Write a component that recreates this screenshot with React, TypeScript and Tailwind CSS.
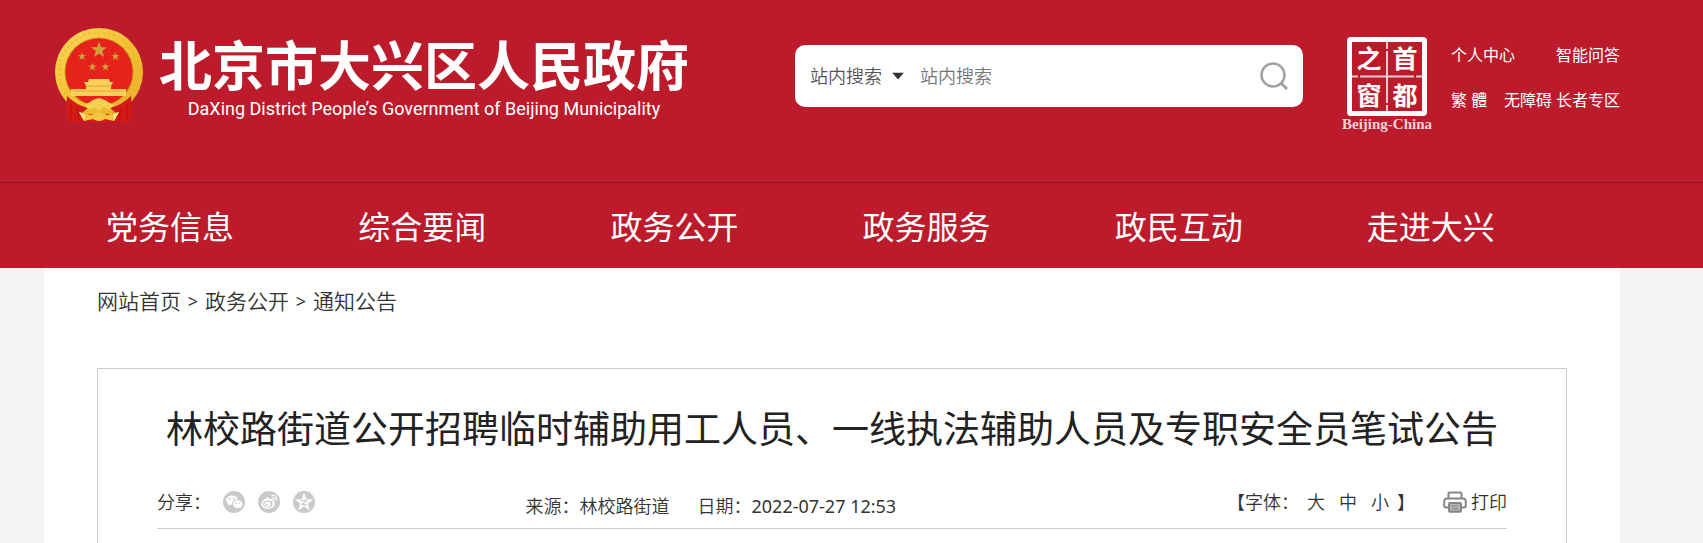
import React from 'react';

const NAV = ['党务信息', '综合要闻', '政务公开', '政务服务', '政民互动', '走进大兴'];
const CRUMBS = ['网站首页', '政务公开', '通知公告'];
const STAR = '0,-10 2.4,-3.2 9.5,-3.1 3.8,1.2 5.9,8.1 0,4 -5.9,8.1 -3.8,1.2 -9.5,-3.1 -2.4,-3.2';

function Emblem() {
  return (
    <svg viewBox="0 -1 90 96" className="h-24 w-[90px] shrink-0" role="img" aria-label="国徽">
      <defs>
        <linearGradient id="gold" x1="0" y1="0" x2="1" y2="1">
          <stop offset="0" stopColor="#fbd75a" />
          <stop offset="0.5" stopColor="#f3c233" />
          <stop offset="1" stopColor="#e9a92a" />
        </linearGradient>
      </defs>
      <circle cx="45" cy="43" r="44" fill="url(#gold)" />
      <circle cx="45" cy="43" r="39.500" fill="none" stroke="#efb933" strokeWidth="2" strokeDasharray="2 3" />
      <circle cx="45" cy="43" r="34.500" fill="#c98a1e" />
      <circle cx="45" cy="43" r="33.500" fill="#e5231a" />
      <g fill="#d0a03a">
        <polygon points={STAR} transform="translate(45 21) scale(0.85)" />
        <polygon points={STAR} transform="translate(28 27.500) scale(0.43)" />
        <polygon points={STAR} transform="translate(61.500 27.500) scale(0.43)" />
        <polygon points={STAR} transform="translate(38.500 38) scale(0.43)" />
        <polygon points={STAR} transform="translate(51.500 38) scale(0.43)" />
      </g>
      <path d="M35 50 h20 l1 3 h3 l-2 4 v3 h15 v7 H17 v-7 h15 v-3 l-2-4 h4 Z" fill="#f8d05a" />
      <path d="M32 57 h26 M20 62 h50" stroke="#e5a52e" strokeWidth="1" />
      <path d="M13 67 Q22 76 34 79 L28 84 L32 93 Q24 91 19 94 Q11 91 12 82 Z M77 67 Q68 76 56 79 L62 84 L58 93 Q66 91 71 94 Q79 91 78 82 Z" fill="#d31a14" />
      <path d="M17 74 Q18 84 16 91 M23 78 L25 91 M73 74 Q72 84 74 91 M67 78 L65 91" stroke="#b80f11" strokeWidth="1" fill="none" />
      <path d="M30 85 H60 L56 93 H34 Z" fill="#d31a14" />
      <path d="M30 76 l6-3 3-2 6-2 6 2 3 2 6 3 -5 5 -5-3 -5 4 -5-4 -5 3 Z" fill="#f7cf52" />
      <path d="M25 83 l12 3 q8-5 16 0 l12-3 -5 9 -9-2 q-6 4 -12 0 l-9 2 Z" fill="#f4c640" />
      <path d="M25 83 l6 2-1 7Z M65 83 l-6 2 1 7Z" fill="#fbe58a" />
    </svg>
  );
}

function Seal() {
  return (
    <a href="#beijing" className="flex w-[88px] shrink-0 flex-col items-center" aria-label="首都之窗">
      <svg viewBox="0 0 80 79" className="h-[79px] w-20">
        <rect x="2.500" y="2.500" width="75" height="74" rx="1.500" fill="none" stroke="#fff" strokeWidth="5" />
        <path d="M40 5 V12 M40 14 V66 M40 68 V75 M5 39.500 H11 M13 39.500 H67 M69 39.500 H75" stroke="#f3c9cd" strokeWidth="2" fill="none" />
        <g fill="#fff" fontSize="25" fontWeight="700" textAnchor="middle" fontFamily="'Noto Sans CJK SC', sans-serif">
          <text x="22" y="31">之</text>
          <text x="58" y="31">首</text>
          <text x="22" y="68">窗</text>
          <text x="58" y="68">都</text>
        </g>
      </svg>
      <span className="font-['Liberation_Serif',serif] text-[15px] leading-4 font-bold whitespace-nowrap text-[#f6d3d6]">Beijing-China</span>
    </a>
  );
}

function WechatIcon() {
  return (
    <svg viewBox="0 0 22 22" className="size-[22px]">
      <circle cx="11" cy="11" r="11" fill="#cacaca" />
      <path d="M9 4.500c-3.300 0-5.800 2-5.800 4.600 0 1.500.8 2.700 2 3.600L4.700 14.600l2.200-1.100c.7.200 1.400.3 2.100.3-.5-3.300 2.300-5.400 5.700-5.400C14.200 6 11.900 4.500 9 4.500Z" fill="#fff" />
      <path d="M14.800 9.300c-2.800 0-4.700 1.800-4.700 3.900s1.900 3.900 4.700 3.900c.6 0 1.200-.1 1.700-.3l1.700.9-.4-1.600c1-.7 1.700-1.700 1.700-2.900 0-2.100-2-3.900-4.700-3.900Z" fill="#fff" />
      <g fill="#cacaca">
        <circle cx="7" cy="8" r=".9" /><circle cx="11" cy="8" r=".9" />
        <circle cx="13.200" cy="12.300" r=".8" /><circle cx="16.500" cy="12.300" r=".8" />
      </g>
    </svg>
  );
}

function WeiboIcon() {
  return (
    <svg viewBox="0 0 22 22" className="size-[22px]">
      <circle cx="11" cy="11" r="11" fill="#cacaca" />
      <path d="M9.500 6.500c1.200-.4 2 .3 1.600 1.800 2-.8 4-.6 3.600 1.400 1.400.5 2.100 1.400 2.100 2.700 0 2.800-3.300 5.300-7.300 5.300S3.500 15.800 3.500 13.300c0-2.600 3.400-6 6-6.800Z" fill="#fff" />
      <ellipse cx="9.900" cy="13" rx="4.700" ry="3.400" fill="#cacaca" />
      <ellipse cx="9.600" cy="13.300" rx="3" ry="2.500" fill="#fff" />
      <circle cx="9" cy="13.700" r="1.100" fill="#cacaca" />
      <path d="M13.800 4.300c2.800-.6 5.300 1.800 4.500 4.700M14.200 6.800c1.300-.2 2.200.7 1.900 2" fill="none" stroke="#fff" strokeWidth="1.200" strokeLinecap="round" />
    </svg>
  );
}

function QzoneIcon() {
  return (
    <svg viewBox="0 0 22 22" className="size-[22px]">
      <circle cx="11" cy="11" r="11" fill="#cacaca" />
      <polygon points={STAR} transform="translate(11 11.500) scale(0.87)" fill="#fff" stroke="#fff" strokeLinejoin="round" />
      <path d="M8 9.500q3-.6 5.500 0l-4.500 4q2.500.6 4.500.1" fill="none" stroke="#cacaca" strokeWidth="1.200" />
    </svg>
  );
}

function PrinterIcon() {
  return (
    <svg viewBox="0 0 24 22" className="h-[22px] w-6" fill="none" stroke="#858585" strokeWidth="2">
      <path d="M5.500 8V2.500Q5.500 1.500 6.500 1.500H17.500Q18.500 1.500 18.500 2.500V8" />
      <path d="M5 16.500H3Q1.200 16.500 1.200 14.500V10.500Q1.200 7.500 4.200 7.500H19.800Q22.800 7.500 22.800 10.500V14.500Q22.800 16.500 21 16.500H19" />
      <rect x="6" y="12" width="12" height="8.800" rx="1" fill="#b4b4b4" />
      <path d="M8.500 15h7M8.500 17.800h7" strokeWidth="1" />
    </svg>
  );
}

export default function App() {
  return (
    <div className="min-h-screen bg-[#f4f4f4] font-['Noto_Sans','Noto_Sans_CJK_SC',sans-serif] text-[#333]">
      <header className="bg-[#bc1b2c] text-white">
        <div className="flex h-[182px] items-start pr-[83px] pl-[54px]">
          <a href="#home" className="flex shrink-0 pt-7">
            <Emblem />
            <span className="ml-[15px] flex flex-col items-center whitespace-nowrap">
              <span className="font-['Noto_Sans_CJK_SC',sans-serif] text-[53px] leading-[70px] font-bold">北京市大兴区人民政府</span>
              <span className="font-[Roboto,sans-serif] text-lg leading-[22px]">DaXing District People’s Government of Beijing Municipality</span>
            </span>
          </a>
          <form className="mt-[45px] ml-[106px] flex h-[62px] min-w-0 flex-1 items-center rounded-[10px] bg-white px-[15px] text-lg text-[#555]" onSubmit={(e) => e.preventDefault()}>
            <div className="relative shrink-0">
              <select aria-label="搜索范围" className="w-[98px] appearance-none bg-transparent font-[350] outline-none">
                <option>站内搜索</option>
              </select>
              <svg viewBox="0 0 12 7" className="pointer-events-none absolute top-1/2 right-1 h-[7px] w-3 -translate-y-1/2">
                <path d="M0 0H12L6 7Z" fill="#333" />
              </svg>
            </div>
            <input type="search" aria-label="站内搜索" placeholder="站内搜索" className="ml-3 min-w-0 flex-1 bg-transparent font-[350] outline-none placeholder:text-[#757575]" />
            <button type="submit" aria-label="搜索">
              <svg viewBox="0 0 28 28" className="size-7" fill="none" stroke="#a2a2a2" strokeWidth="2.500">
                <circle cx="13" cy="13" r="11.500" />
                <path d="M21 21l6 6" strokeWidth="3" />
              </svg>
            </button>
          </form>
          <div className="ml-10 flex shrink-0 pt-[37px]">
            <Seal />
            <div className="ml-5 flex w-[169px] flex-col gap-[21px] pt-[6px] text-base leading-6 whitespace-nowrap">
              <div className="flex justify-between">
                <a href="#user">个人中心</a>
                <a href="#qa">智能问答</a>
              </div>
              <div className="flex justify-between">
                <a href="#hant">繁 體</a>
                <span className="flex gap-1">
                  <a href="#a11y">无障碍</a>
                  <a href="#senior">长者专区</a>
                </span>
              </div>
            </div>
          </div>
        </div>
        <nav className="border-t border-[#8e1620] pr-[83px] pl-11">
          <ul className="flex">
            {NAV.map((n) => (
              <li key={n} className="w-[16%] text-center">
                <a href={'#' + n} className="block pt-0.5 text-[32px] leading-[83px] whitespace-nowrap">{n}</a>
              </li>
            ))}
          </ul>
        </nav>
      </header>

      <div className="pr-[83px] pl-11">
        <main className="min-h-[275px] bg-white px-[53px]">
          <nav aria-label="面包屑" className="flex pt-[17px] text-[21px] leading-8 font-[350]">
            {CRUMBS.map((c, i) => (
              <React.Fragment key={c}>
                {i > 0 && <span className="w-6 text-center text-lg leading-8 font-normal">&gt;</span>}
                <a href={'#' + c}>{c}</a>
              </React.Fragment>
            ))}
          </nav>
          <article className="mt-[51px] min-h-[175px] border border-b-0 border-[#ccc] px-[59px]">
            <h1 className="flex justify-center pt-[34px] text-[37px] leading-[52px] whitespace-nowrap text-[#222]">
              林校路街道公开招聘临时辅助用工人员、一线执法辅助人员及专职安全员笔试公告
            </h1>
            <div className="mt-[31px] flex h-[43px] items-start border-b border-[#ccc] text-lg leading-8 font-[350] whitespace-nowrap">
              <div className="flex w-[27%] items-center">
                <span>分享：</span>
                <div className="ml-3 flex gap-[13px]">
                  <button aria-label="微信"><WechatIcon /></button>
                  <button aria-label="微博"><WeiboIcon /></button>
                  <button aria-label="QQ空间"><QzoneIcon /></button>
                </div>
              </div>
              <div className="flex flex-1 gap-7 pt-1 pl-1">
                <span>来源：林校路街道</span>
                <span>日期：<time className="font-normal">2022-07-27 12:53</time></span>
              </div>
              <div className="flex items-center">
                <span>【字体：</span>
                <span className="ml-2 flex gap-[14px]">
                  <button>大</button>
                  <button>中</button>
                  <button>小</button>
                </span>
                <span className="ml-2">】</span>
                <button className="ml-7 flex items-center gap-1">
                  <PrinterIcon />
                  打印
                </button>
              </div>
            </div>
          </article>
        </main>
      </div>
    </div>
  );
}
